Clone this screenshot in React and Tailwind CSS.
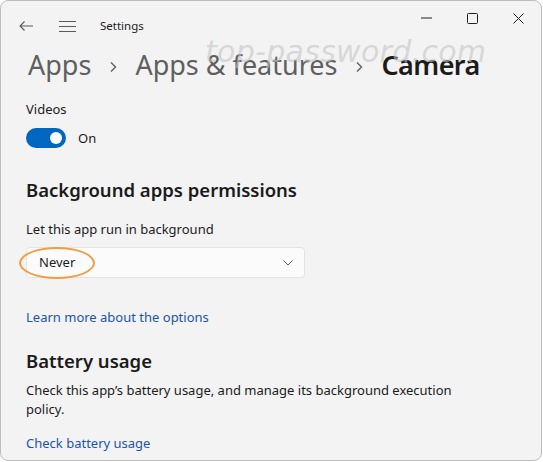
import { useState } from 'react';

const font = { fontFamily: '"Noto Sans", "Open Sans", sans-serif' };

function BackIcon() {
  return (
    <svg width="16" height="12" viewBox="0 0 16 12" fill="none" stroke="#5a5a5a" strokeWidth="1.1">
      <path d="M15 6H2M6.5 1.5 2 6l4.5 4.5" />
    </svg>
  );
}

function MenuIcon() {
  return (
    <svg width="17" height="11" viewBox="0 0 17 11" fill="none" stroke="#5a5a5a" strokeWidth="1.1">
      <path d="M0 0.5h17M0 5.5h17M0 10.5h17" />
    </svg>
  );
}

function WindowControls() {
  return (
    <div className="flex items-start">
      <div className="flex h-[34px] w-[46px] items-center justify-center">
        <svg width="11" height="2" viewBox="0 0 11 2" stroke="#1f1f1f" strokeWidth="1">
          <path d="M0 1h11" />
        </svg>
      </div>
      <div className="flex h-[34px] w-[46px] items-center justify-center">
        <svg width="11" height="11" viewBox="0 0 11 11" fill="none" stroke="#1f1f1f" strokeWidth="1">
          <rect x="0.5" y="0.5" width="10" height="10" rx="1" />
        </svg>
      </div>
      <div className="flex h-[34px] w-[46px] items-center justify-center">
        <svg width="11" height="11" viewBox="0 0 11 11" fill="none" stroke="#1f1f1f" strokeWidth="1">
          <path d="M0.5 0.5l10 10M10.5 0.5l-10 10" />
        </svg>
      </div>
    </div>
  );
}

function Toggle({ on, onChange }) {
  return (
    <button
      onClick={() => onChange(!on)}
      className={`flex h-[20px] w-[40px] items-center rounded-full px-[4px] ${on ? 'justify-end bg-[#0067c0]' : 'justify-start border border-[#5a5a5a] bg-transparent'}`}
    >
      <span className={`block h-[12px] w-[12px] rounded-full ${on ? 'bg-white' : 'bg-[#5a5a5a]'}`} />
    </button>
  );
}

function Chevron() {
  return (
    <svg width="10" height="6" viewBox="0 0 10 6" fill="none" stroke="#5a5a5a" strokeWidth="1">
      <path d="M0.5 0.5 5 5l4.5-4.5" />
    </svg>
  );
}

function Crumb() {
  return (
    <svg width="8" height="12" viewBox="0 0 8 12" fill="none" stroke="#5f5f5f" strokeWidth="1.4" className="mx-[18px] mt-[4px]">
      <path d="M2 1.5 6.5 6 2 10.5" />
    </svg>
  );
}

export default function App() {
  const [videos, setVideos] = useState(true);

  return (
    <div className="h-[462px] w-[543px] bg-white" style={font}>
      <div className="relative flex h-[461px] w-[542px] flex-col overflow-hidden rounded-[8px] border border-[#bdbdbd] bg-[#f3f3f3] text-[#1b1b1b]">
        <div className="flex h-[46px] items-start justify-between">
          <div className="flex items-center pl-[17px] pt-[19px]">
            <BackIcon />
            <span className="ml-[25px]"><MenuIcon /></span>
            <span className="ml-[24px] text-[11.5px] leading-none text-[#1b1b1b]">Settings</span>
          </div>
          <WindowControls />
        </div>

        <div className="flex items-center pl-[27px] text-[27px] leading-[36px]">
          <span className="text-[#5f5f5f]">Apps</span>
          <Crumb />
          <span className="text-[#5f5f5f]">Apps &amp; features</span>
          <Crumb />
          <span className="font-semibold tracking-[-0.6px] text-[#1b1b1b]">Camera</span>
        </div>

        <div className="flex flex-col pl-[25px] pt-[16px]">
          <div className="text-[13px] leading-[20px]">Videos</div>
          <div className="mt-[9px] flex items-center gap-[12px]">
            <Toggle on={videos} onChange={setVideos} />
            <span className="text-[13px] leading-[20px]">{videos ? 'On' : 'Off'}</span>
          </div>

          <h2 className="mt-[28px] text-[18.5px] font-semibold leading-[28px]">Background apps permissions</h2>

          <div className="mt-[15px] text-[13px] leading-[20px]">Let this app run in background</div>

          <div className="relative mt-[8px] flex h-[31px] w-[279px] items-center justify-between rounded-[4px] border border-[#e3e3e3] bg-[#fbfbfb] pl-[12px] pr-[11px]">
            <span className="text-[13px]">Never</span>
            <Chevron />
            <span className="pointer-events-none absolute left-[-8px] top-[-1px] h-[32px] w-[76px] rounded-[50%] border-2 border-[#f59a3e]" />
          </div>

          <a className="mt-[29px] text-[13px] leading-[20px] text-[#1a55a8]">Learn more about the options</a>

          <h2 className="mt-[20px] text-[18.5px] font-semibold leading-[28px]">Battery usage</h2>

          <p className="mt-[6px] w-[460px] text-[13px] leading-[19px]">
            Check this app’s battery usage, and manage its background execution policy.
          </p>

          <a className="mt-[14px] text-[13px] leading-[20px] text-[#1a55a8]">Check battery usage</a>
        </div>

        <div
          className="pointer-events-none absolute left-[204px] top-[28px] text-[30px] italic tracking-[0.3px] text-[#c4c4c4]/60"
          style={{ fontFamily: '"DejaVu Sans", sans-serif' }}
        >
          top-password.com
        </div>
      </div>
    </div>
  );
}
